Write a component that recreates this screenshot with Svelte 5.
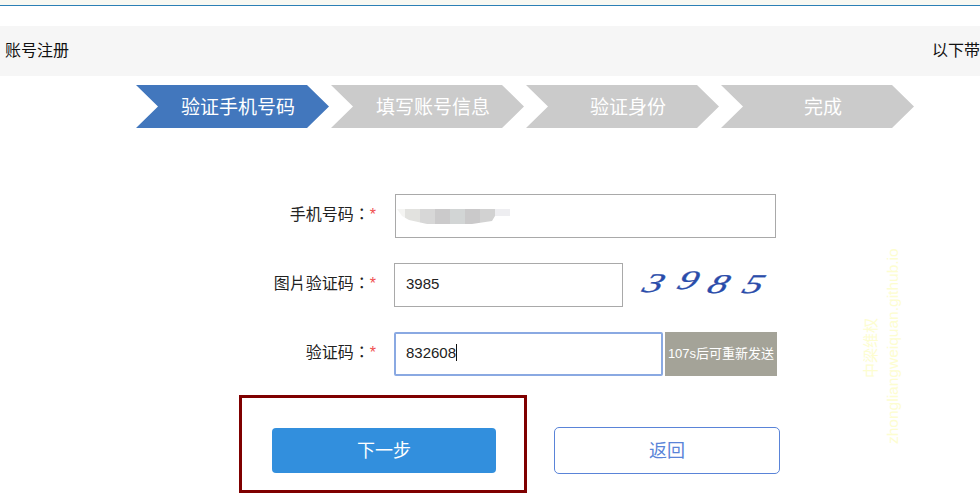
<script>
    const steps = [
        { label: '验证手机号码', active: true },
        { label: '填写账号信息' },
        { label: '验证身份' },
        { label: '完成' }
    ];
</script>

<div class="page">
    <div class="topline"></div>

    <div class="titlebar">
        <span>账号注册</span>
        <span>以下带</span>
    </div>

    <ul class="steps">
        {#each steps as step}
            <li class:active={step.active}>{step.label}</li>
        {/each}
    </ul>

    <form class="form" on:submit|preventDefault>
        <div class="row">
            <label class="label" for="phone">手机号码：<i>*</i></label>
            <div class="input phone" id="phone">
                <div class="blur"></div>
            </div>
        </div>

        <div class="row row2">
            <label class="label" for="pic">图片验证码：<i>*</i></label>
            <div class="input pic" id="pic">3985</div>
            <div class="captcha">
                <span class="c3">3</span>
                <span class="c9">9</span>
                <span class="c8">8</span>
                <span class="c5">5</span>
            </div>
        </div>

        <div class="row row3">
            <label class="label" for="sms">验证码：<i>*</i></label>
            <div class="input sms" id="sms">832608<b class="caret"></b></div>
            <div class="resend">107s后可重新发送</div>
        </div>

        <div class="actions">
            <div class="highlight">
                <button type="button" class="next">下一步</button>
            </div>
            <button type="button" class="back">返回</button>
        </div>
    </form>

    <div class="watermark">
        <span class="wm-cn">中梁维权</span>
        <span class="wm-en">zhongliangweiquan.github.io</span>
    </div>
</div>

<style>
    :global(body) {
        margin: 0;
        background: #fff;
    }

    .page {
        position: relative;
        width: 980px;
        height: 501px;
        overflow: hidden;
        font-family: "Liberation Sans", "Noto Sans CJK SC", sans-serif;
        color: #222;
    }

    .topline {
        height: 5px;
        background: #f7f8f2;
        border-bottom: 1px solid #2b7fb5;
    }

    .titlebar {
        box-sizing: border-box;
        display: flex;
        justify-content: space-between;
        align-items: center;
        height: 50px;
        margin-top: 20px;
        padding: 0 0 4px 5px;
        background: #f6f6f6;
        font-size: 16px;
        color: #111;
        white-space: nowrap;
    }

    .steps {
        display: flex;
        gap: 2px;
        list-style: none;
        margin: 9px 0 0 136px;
        padding: 0;
    }

    .steps li {
        box-sizing: border-box;
        width: 193px;
        height: 43px;
        padding-left: 11px;
        line-height: 45px;
        text-align: center;
        font-size: 19px;
        color: #fff;
        background: #cbcbcb;
        clip-path: polygon(0 0, 171px 0, 193px 50%, 171px 100%, 0 100%, 22px 50%);
    }

    .steps li.active {
        background: #4277bd;
    }

    .form {
        margin-top: 66px;
    }

    .row {
        display: flex;
        align-items: center;
        height: 44px;
    }

    .row2 {
        margin-top: 25px;
    }

    .row3 {
        margin-top: 25px;
    }

    .label {
        box-sizing: border-box;
        width: 376px;
        padding-bottom: 6px;
        text-align: right;
        font-family: "Liberation Sans", "Noto Sans CJK TC", sans-serif;
        font-size: 16px;
        color: #222;
        white-space: nowrap;
    }

    .label i {
        font-style: normal;
        color: #f05050;
        font-size: 16px;
    }

    .input {
        box-sizing: border-box;
        height: 44px;
        line-height: 40px;
        padding-left: 11px;
        border: 1px solid #a9a9a9;
        font-size: 15px;
        color: #222;
    }

    .phone {
        position: relative;
        width: 381px;
        margin-left: 19px;
    }

    .blur {
        position: absolute;
        left: 1px;
        top: 14px;
        width: 113px;
        height: 16px;
        background: linear-gradient(90deg,
            #f4f4f2 0 8px, #e2e2df 8px 23px, #d7d7d7 23px 38px, #cbcacb 38px 53px,
            #d2d5d5 53px 68px, #cac9ca 68px 83px, #d2d2d2 83px 98px, #eeeef1 98px 113px);
        clip-path: polygon(0 0, 113px 0, 113px 7px, 98px 7px, 95px 12px, 75px 15px, 30px 15px, 12px 11px, 5px 7px);
    }

    .pic {
        width: 229px;
        margin-left: 18px;
    }

    .captcha {
        display: flex;
        margin: -3px 0 0 18px;
        width: 130px;
        font-family: "Liberation Serif", serif;
        font-style: italic;
        font-size: 27px;
        color: #2a4caa;
        -webkit-text-stroke: 0.3px #2a4caa;
    }

    .captcha span {
        display: block;
        transform: scaleX(1.45) skewX(-16deg);
    }

    .c3 { margin-left: 6px; }
    .c9 { margin-left: 20px; margin-top: -3px; }
    .c8 { margin-left: 18px; margin-top: 1px; }
    .c5 { margin-left: 21px; margin-top: 1px; }

    .sms {
        width: 269px;
        margin-left: 18px;
        border: 2px solid #8aa9e2;
        border-radius: 2px;
        line-height: 38px;
        padding-left: 10px;
    }

    .caret {
        display: inline-block;
        width: 1px;
        height: 17px;
        vertical-align: -3px;
        background: #111;
    }

    .resend {
        width: 112px;
        height: 44px;
        margin-left: 2px;
        line-height: 44px;
        text-align: center;
        font-size: 13px;
        color: #fff;
        background: #a4a398;
        white-space: nowrap;
    }

    .actions {
        display: flex;
        align-items: flex-start;
        margin: 19px 0 0 239px;
    }

    .highlight {
        box-sizing: border-box;
        width: 288px;
        height: 98px;
        padding: 30px 0 0 30px;
        border: 3px solid #7f0000;
    }

    button {
        font-family: inherit;
        font-size: 18px;
        cursor: pointer;
    }

    .next {
        display: block;
        width: 224px;
        height: 45px;
        padding: 0 0 3px;
        border: none;
        border-radius: 4px;
        color: #fff;
        background: #328fdd;
    }

    .back {
        box-sizing: border-box;
        width: 226px;
        height: 47px;
        margin: 32px 0 0 27px;
        padding: 0 0 3px;
        border: 1px solid #5a84d8;
        border-radius: 5px;
        color: #5a84d8;
        background: #fff;
    }

    .watermark {
        position: absolute;
        left: 860px;
        top: 250px;
        width: 42px;
        height: 196px;
        pointer-events: none;
        color: #fdfdd0;
        white-space: nowrap;
    }

    .wm-cn, .wm-en {
        position: absolute;
        transform-origin: 0 0;
        transform: rotate(-90deg);
    }

    .wm-cn {
        left: -1px;
        top: 128px;
        font-size: 15px;
    }

    .wm-en {
        left: 24px;
        top: 194px;
        font-size: 15.5px;
    }
</style>
